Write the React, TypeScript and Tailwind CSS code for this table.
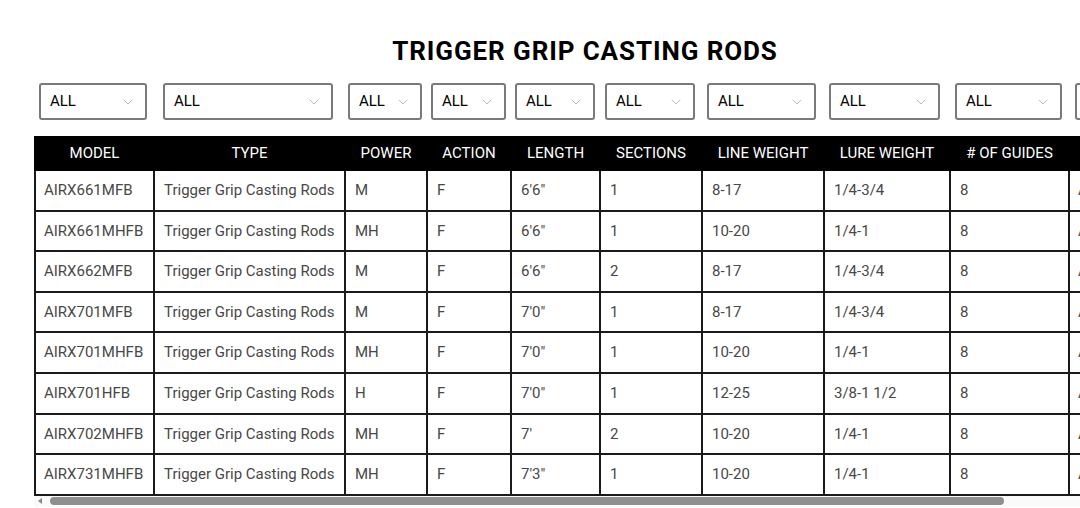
import { ChevronDown } from "lucide-react";

const filters = [
  "w-[108px] ml-[5px]",
  "w-[170px] ml-[16px]",
  "w-[74px] ml-[15px]",
  "w-[75px] ml-[9px]",
  "w-[80px] ml-[9px]",
  "w-[90px] ml-[10px]",
  "w-[109px] ml-[12px]",
  "w-[111px] ml-[13px]",
  "w-[107px] ml-[15px]",
  "w-[107px] ml-[13px]",
];

const columns = [
  { title: "MODEL", w: "w-[119px]" },
  { title: "TYPE", w: "w-[191px]" },
  { title: "POWER", w: "w-[82px]" },
  { title: "ACTION", w: "w-[84px]" },
  { title: "LENGTH", w: "w-[89px]" },
  { title: "SECTIONS", w: "w-[102px]" },
  { title: "LINE WEIGHT", w: "w-[122px]" },
  { title: "LURE WEIGHT", w: "w-[126px]" },
  { title: "# OF GUIDES", w: "w-[119px]" },
  { title: "GUIDE TYPE", w: "w-[207px]" },
];

const rows = [
  ["AIRX661MFB", "M", "F", `6'6"`, "1", "8-17", "1/4-3/4", "8"],
  ["AIRX661MHFB", "MH", "F", `6'6"`, "1", "10-20", "1/4-1", "8"],
  ["AIRX662MFB", "M", "F", `6'6"`, "2", "8-17", "1/4-3/4", "8"],
  ["AIRX701MFB", "M", "F", `7'0"`, "1", "8-17", "1/4-3/4", "8"],
  ["AIRX701MHFB", "MH", "F", `7'0"`, "1", "10-20", "1/4-1", "8"],
  ["AIRX701HFB", "H", "F", `7'0"`, "1", "12-25", "3/8-1 1/2", "8"],
  ["AIRX702MHFB", "MH", "F", `7'`, "2", "10-20", "1/4-1", "8"],
  ["AIRX731MHFB", "MH", "F", `7'3"`, "1", "10-20", "1/4-1", "8"],
];

function App() {
  return (
    <div className="w-full h-[508px] overflow-hidden bg-white font-['Roboto',sans-serif]">
      <div className="w-[1170px] px-[34px] pt-[33px]">
        <h1 className="text-center text-[26px] leading-[36px] font-bold tracking-[0.9px] text-black">
          TRIGGER GRIP CASTING RODS
        </h1>

        <div className="flex mt-[14px]">
          {filters.map((cls, i) => (
            <div
              key={i}
              className={`${cls} shrink-0 h-[37px] flex items-center justify-between border-2 border-[#7a7a7a] rounded-[3px] pl-[9px] pr-[9px] text-[15px] text-black`}
            >
              <span>ALL</span>
              <ChevronDown size={16} strokeWidth={1} className="text-[#9a9a9a]" />
            </div>
          ))}
        </div>

        <div className="mt-[16px] overflow-hidden">
          <table className="table-fixed border-collapse w-[1241px] text-[15px]">
            <colgroup>
              {columns.map((c) => (
                <col key={c.title} className={c.w} />
              ))}
            </colgroup>
            <thead>
              <tr className="bg-black text-white h-[33px]">
                {columns.map((c) => (
                  <th key={c.title} className="font-normal text-center whitespace-nowrap px-2 border-2 border-black">
                    {c.title}
                  </th>
                ))}
              </tr>
            </thead>
            <tbody>
              {rows.map((r) => (
                <tr key={r[0]} className="h-[40.6px] text-[#484848]">
                  <td className="border-2 border-[#1a1a1a] pl-[8px] whitespace-nowrap">{r[0]}</td>
                  <td className="border-2 border-[#1a1a1a] pl-[9px] whitespace-nowrap">Trigger Grip Casting Rods</td>
                  {r.slice(1).map((v, i) => (
                    <td key={i} className="border-2 border-[#1a1a1a] pl-[9px] whitespace-nowrap">{v}</td>
                  ))}
                  <td className="border-2 border-[#1a1a1a] pl-[8px] whitespace-nowrap">ALPS</td>
                </tr>
              ))}
            </tbody>
          </table>
          {/* horizontal scrollbar */}
          <div className="h-[11px] flex items-center bg-[#fafafa]">
            <div className="ml-[4px] w-0 h-0 border-y-[3px] border-y-transparent border-r-[4px] border-r-[#8a8a8a]" />
            <div className="ml-[8px] w-[954px] h-[8px] rounded-full bg-[#8e8e8e]" />
          </div>
        </div>
      </div>
    </div>
  );
}

export default App;
